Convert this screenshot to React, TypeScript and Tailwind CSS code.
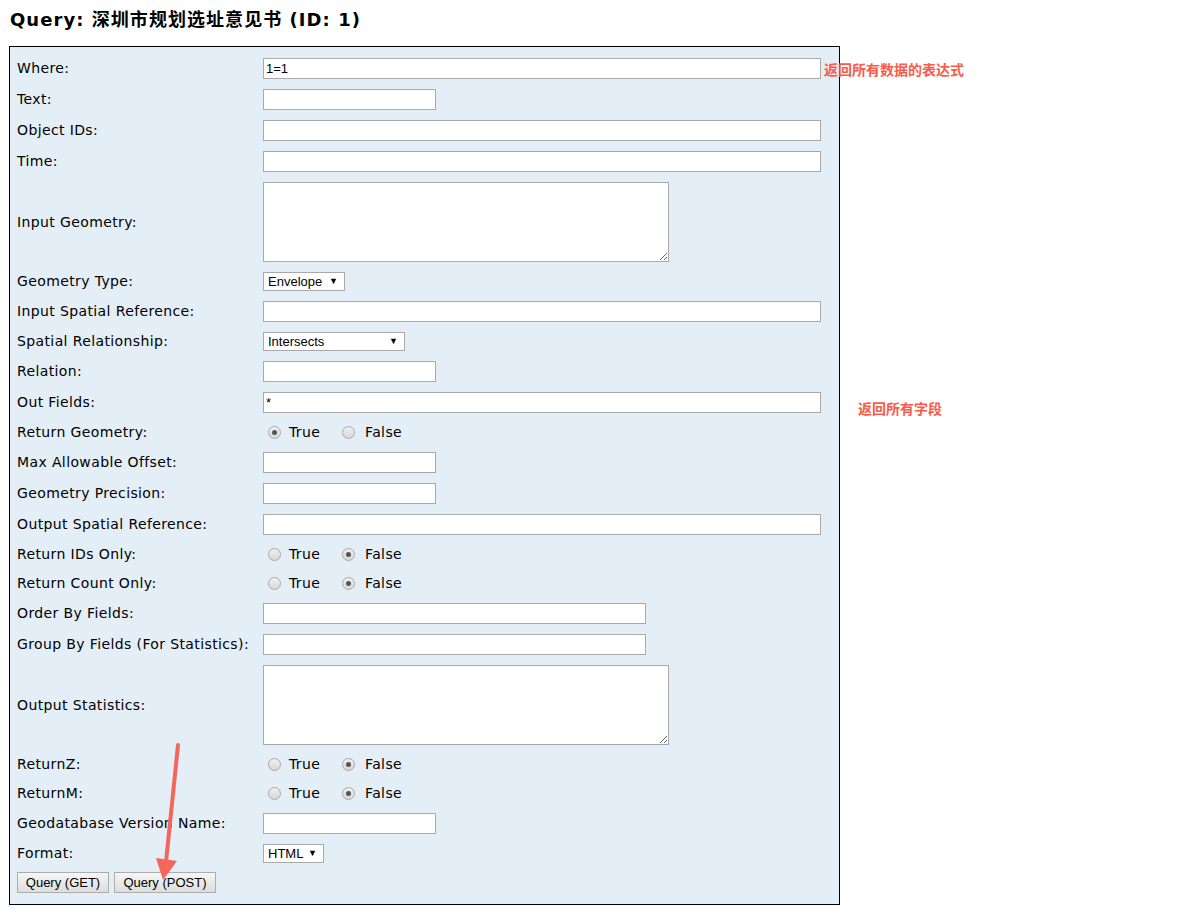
import React from "react";

const V = "font-['DejaVu_Sans','Noto_Sans_CJK_SC',sans-serif]";
const A = "font-['Liberation_Sans',Arial,sans-serif]";

function Label({ children }: { children: React.ReactNode }) {
  return (
    <div className={`w-[246px] shrink-0 whitespace-nowrap text-[14px] tracking-[0.38px] text-black ${V}`}>
      {children}
    </div>
  );
}

function TextInput({ w, value = "" }: { w: string; value?: string }) {
  return (
    <input
      readOnly
      value={value}
      className={`${w} h-[21px] border border-[#a9a9a9] bg-white px-[2px] text-[13px] text-black outline-none ${A}`}
    />
  );
}

function InputRow({ label, w, value }: { label: string; w: string; value?: string }) {
  return (
    <div className="flex h-[31px] items-center">
      <Label>{label}</Label>
      <TextInput w={w} value={value} />
    </div>
  );
}

function Select({ w, value }: { w: string; value: string }) {
  return (
    <div
      className={`${w} flex h-[19px] items-center justify-between border border-[#a9a9a9] bg-white pl-[4px] pr-[6px] text-[13px] text-black ${A}`}
    >
      <span>{value}</span>
      <span className="text-[9px] leading-none">▼</span>
    </div>
  );
}

function SelectRow({ label, w, value }: { label: string; w: string; value: string }) {
  return (
    <div className="flex h-[29px] items-center">
      <Label>{label}</Label>
      <Select w={w} value={value} />
    </div>
  );
}

function Radio({ checked }: { checked: boolean }) {
  return (
    <span className="flex h-[13px] w-[13px] items-center justify-center rounded-full border border-[#a8a8a8] bg-gradient-to-b from-[#f0f0f0] to-[#d8d8d8]">
      {checked && <span className="h-[5px] w-[5px] rounded-full bg-[#555]" />}
    </span>
  );
}

function RadioRow({ label, trueChecked }: { label: string; trueChecked: boolean }) {
  return (
    <div className="flex h-[29px] items-center">
      <Label>{label}</Label>
      <div className={`flex items-center pl-[5px] text-[14px] tracking-[0.38px] text-black ${V}`}>
        <Radio checked={trueChecked} />
        <span className="ml-[8px] w-[33px]">True</span>
        <span className="ml-[20px]">
          <Radio checked={!trueChecked} />
        </span>
        <span className="ml-[10px]">False</span>
      </div>
    </div>
  );
}

function TextareaRow({ label }: { label: string }) {
  return (
    <div className="flex h-[90px] items-center">
      <Label>{label}</Label>
      <textarea readOnly className="h-[80px] w-[406px] border border-[#a9a9a9] bg-white outline-none" />
    </div>
  );
}

function Button({ children, w }: { children: React.ReactNode; w: string }) {
  return (
    <div
      className={`${w} flex h-[21px] items-center justify-center border border-[#adadad] bg-gradient-to-b from-[#f6f6f6] to-[#dddddd] text-[13px] text-black ${A}`}
    >
      {children}
    </div>
  );
}

export default function App() {
  const wide = "w-[558px]";
  const short = "w-[173px]";
  const mid = "w-[383px]";
  return (
    <div className="relative min-h-[913px] w-[1192px] bg-white">
      <div className="pl-[9px] pt-[9px]">
        <h1 className={`ml-[1px] whitespace-nowrap text-[18px] font-bold leading-[21px] tracking-[1.05px] text-black ${V}`}>
          Query: 深圳市规划选址意见书 (ID: 1)
        </h1>
        <div className="mt-[16px] w-[831px] border border-black bg-[#e4eef7] pb-[7px] pl-[7px] pt-[6px]">
          <InputRow label="Where:" w={wide} value="1=1" />
          <InputRow label="Text:" w={short} />
          <InputRow label="Object IDs:" w={wide} />
          <InputRow label="Time:" w={wide} />
          <TextareaRow label="Input Geometry:" />
          <SelectRow label="Geometry Type:" w="w-[82px]" value="Envelope" />
          <InputRow label="Input Spatial Reference:" w={wide} />
          <SelectRow label="Spatial Relationship:" w="w-[142px]" value="Intersects" />
          <InputRow label="Relation:" w={short} />
          <InputRow label="Out Fields:" w={wide} value="*" />
          <RadioRow label="Return Geometry:" trueChecked={true} />
          <InputRow label="Max Allowable Offset:" w={short} />
          <InputRow label="Geometry Precision:" w={short} />
          <InputRow label="Output Spatial Reference:" w={wide} />
          <RadioRow label="Return IDs Only:" trueChecked={false} />
          <RadioRow label="Return Count Only:" trueChecked={false} />
          <InputRow label="Order By Fields:" w={mid} />
          <InputRow label="Group By Fields (For Statistics):" w={mid} />
          <TextareaRow label="Output Statistics:" />
          <RadioRow label="ReturnZ:" trueChecked={false} />
          <RadioRow label="ReturnM:" trueChecked={false} />
          <InputRow label="Geodatabase Version Name:" w={short} />
          <SelectRow label="Format:" w="w-[61px]" value="HTML" />
          <div className="flex h-[29px] items-center gap-[5px]">
            <Button w="w-[92px]">Query (GET)</Button>
            <Button w="w-[102px]">Query (POST)</Button>
          </div>
        </div>
      </div>

      <div className="absolute left-[824px] top-[61px] whitespace-nowrap text-[14px] font-bold leading-[16px] text-[#fa5b4b] font-['Noto_Sans_CJK_SC',sans-serif]">
        返回所有数据的表达式
      </div>
      <div className="absolute left-[858px] top-[400px] whitespace-nowrap text-[14px] font-bold leading-[16px] text-[#fa5b4b] font-['Noto_Sans_CJK_SC',sans-serif]">
        返回所有字段
      </div>

      <svg className="pointer-events-none absolute left-0 top-0" width="1192" height="913">
        <line x1="178" y1="745" x2="166" y2="862" stroke="#f5665a" strokeWidth="4" strokeLinecap="round" />
        <polygon points="156,858 177,861 163,880" fill="#f5665a" />
      </svg>
    </div>
  );
}
